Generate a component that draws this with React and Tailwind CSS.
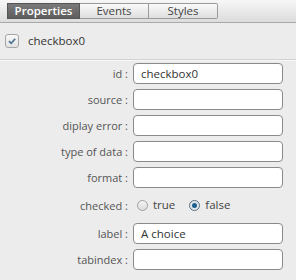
import React from "react";

const font = { fontFamily: '"Open Sans", "Noto Sans", sans-serif' };

function Row({ label, value }) {
  return (
    <div className="flex items-center h-[21px]">
      <div className="w-[129px] text-right text-[11px] text-[#555] pr-[1px] leading-none">{label}</div>
      <div className="ml-[4px] w-[150px] h-[21px] bg-white border border-[#8a8a8a] rounded-[4px] flex items-center pl-[7px] text-[11.5px] text-[#333] leading-none">
        {value}
      </div>
    </div>
  );
}

export default function App() {
  return (
    <div className="w-[296px] h-[280px] bg-[#ececec] overflow-hidden" style={font}>
      <div className="h-[23px] bg-gradient-to-b from-[#f7f7f7] to-[#dcdcdc] border-b border-[#a9a9a9] flex items-start pt-[3px] pl-[7px]">
        <div className="h-[16px] w-[73px] flex items-center justify-center bg-gradient-to-b from-[#7a7a7a] to-[#5e5e5e] border border-[#555] text-white font-semibold text-[11.5px] leading-none">
          Properties
        </div>
        <div className="h-[16px] w-[69px] flex items-center justify-center bg-gradient-to-b from-[#fafafa] to-[#dedede] border-y border-r border-[#9a9a9a] text-[#444] text-[11.5px] leading-none">
          Events
        </div>
        <div className="h-[16px] w-[69px] flex items-center justify-center bg-gradient-to-b from-[#fafafa] to-[#dedede] border-y border-r border-[#9a9a9a] rounded-r-[2px] text-[#444] text-[11.5px] leading-none">
          Styles
        </div>
      </div>
      <div className="h-[36px] flex items-center pl-[5px]">
        <div className="w-[14px] h-[14px] rounded-[3px] border border-[#a5a5a5] bg-gradient-to-b from-[#f8f8f8] to-[#e2e2e2] flex items-center justify-center">
          <svg width="10" height="10" viewBox="0 0 10 10">
            <path d="M2 5.2 L4.2 7.3 L8.2 2.8" fill="none" stroke="#4a6f93" strokeWidth="1.6" />
          </svg>
        </div>
        <span className="ml-[9px] text-[11.5px] text-[#333] leading-none">checkbox0</span>
      </div>
      <div className="h-[1px] bg-[#d2d2d2]" />
      <div className="h-[1px] bg-[#f8f8f8]" />
      <div className="pt-[2px] flex flex-col gap-[5px]">
        <Row label="id :" value="checkbox0" />
        <Row label="source :" />
        <Row label="diplay error :" />
        <Row label="type of data :" />
        <Row label="format :" />
        <div className="flex items-center h-[22px] mt-[1px] mb-[2px]">
          <div className="w-[129px] text-right text-[11px] text-[#555] pr-[1px] leading-none">checked :</div>
          <div className="ml-[8px] flex items-center text-[11.5px] text-[#444] leading-none">
            <span className="w-[11px] h-[11px] rounded-full border border-[#a0a0a0] bg-gradient-to-b from-[#f5f5f5] to-[#dcdcdc]" />
            <span className="ml-[5px]">true</span>
            <span className="ml-[14px] w-[11px] h-[11px] rounded-full border border-[#5a6f80] bg-[#dfe7ee] flex items-center justify-center">
              <span className="w-[5px] h-[5px] rounded-full bg-[#1f5f8b]" />
            </span>
            <span className="ml-[5px]">false</span>
          </div>
        </div>
        <Row label="label :" value="A choice" />
        <Row label="tabindex :" />
      </div>
    </div>
  );
}
